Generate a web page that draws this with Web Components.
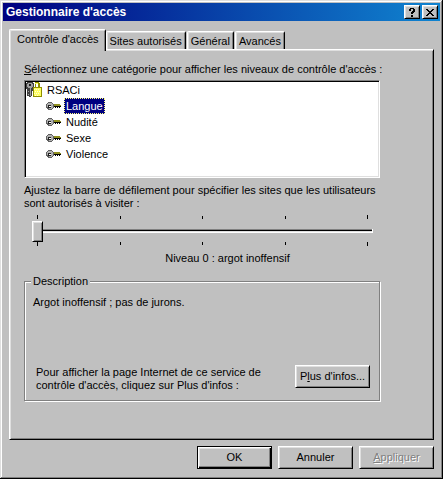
<!DOCTYPE html>
<html lang="fr">
<head>
<meta charset="utf-8">
<title>Gestionnaire d'accès</title>
<style>
  body {
    margin: 0;
    background: #c0c0c0;
    color: #000;
    font: 11px/13px "Liberation Sans", Arial, sans-serif;
  }
</style>
</head>
<body>

<ratings-dialog></ratings-dialog>

<template id="win-button">
  <style>
    :host { display: block; width: 75px; }
    button {
      display: block;
      box-sizing: border-box;
      width: 100%;
      height: 23px;
      padding: 0;
      border: 1px solid;
      border-color: #fff #000 #000 #fff;
      background: #c0c0c0;
      box-shadow: inset 1px 1px #dfdfdf, inset -1px -1px #808080;
      color: #000;
      font: inherit;
      white-space: nowrap;
    }
    :host([default]) button {
      border-color: #000;
      box-shadow: inset 1px 1px #fff, inset -1px -1px #000, inset -2px -2px #808080, inset 2px 2px #dfdfdf;
    }
    button:disabled { color: #808080; text-shadow: 1px 1px #fff; }
  </style>
  <button type="button"><slot></slot></button>
</template>

<template id="title-bar">
  <style>
    :host {
      display: flex;
      align-items: center;
      height: 18px;
      padding: 0 2px 0 3px;
      background: linear-gradient(90deg, #000080, #1084d0);
      color: #fff;
      font-size: 12px;
      font-weight: bold;
    }
    span { flex: 1; }
    button {
      display: grid;
      place-items: center;
      box-sizing: border-box;
      width: 16px;
      height: 14px;
      padding: 0;
      border: 1px solid;
      border-color: #fff #000 #000 #fff;
      background: #c0c0c0;
      box-shadow: inset 1px 1px #dfdfdf, inset -1px -1px #808080;
    }
    button + button { margin-left: 2px; }
    svg { display: block; shape-rendering: crispEdges; }
  </style>
  <span><slot></slot></span>
  <button type="button" aria-label="Aide">
    <svg width="8" height="9" viewBox="0 0 8 9"><path d="M2 0h4v1h1v3h-1v1h-1v1h-2v-2h1v-1h1v-2h-2v2h-2v-2h1zM3 7h2v2h-2z"/></svg>
  </button>
  <button type="button" aria-label="Fermer">
    <svg width="8" height="7" viewBox="0 0 8 7"><path d="M0 0h2v1h1v1h2v-1h1v-1h2v1h-1v1h-1v1h-1v1h1v1h1v1h1v1h-2v-1h-1v-1h-2v1h-1v1h-2v-1h1v-1h1v-1h1v-1h-1v-1h-1v-1h-1z"/></svg>
  </button>
</template>

<template id="tab-bar">
  <style>
    :host { display: flex; align-items: flex-end; padding-left: 1px; }
    button {
      height: 18px;
      padding: 1px 3px 0;
      border: 1px solid;
      border-color: #fff #000 transparent #fff;
      border-bottom: 0;
      border-radius: 2px 2px 0 0;
      background: #c0c0c0;
      box-shadow: inset 1px 1px #dfdfdf, inset -1px 0 #808080;
      color: #000;
      font: inherit;
      white-space: nowrap;
      margin-right: 1px;
    }
    button[aria-selected="true"] {
      position: relative;
      z-index: 1;
      height: 22px;
      margin: 0 0 -2px -1px;
      padding: 0 6px 3px 7px;
    }
  </style>
</template>

<template id="category-tree">
  <style>
    :host {
      display: block;
      height: 94px;
      border: 1px solid;
      border-color: #808080 #fff #fff #808080;
      padding: 1px;
      background: #fff;
      box-shadow: inset 1px 1px #000, inset -1px -1px #dfdfdf;
    }
    ul { margin: 0; padding: 0; list-style: none; }
    ul ul { padding-left: 19px; }
    .row { display: flex; align-items: center; height: 16px; gap: 3px; }
    .row span { padding: 0 2px; line-height: 16px; }
    [aria-selected="true"] span {
      background: #000080;
      color: #fff;
      outline: 1px dotted #ffff7f;
      outline-offset: -1px;
    }
    svg { display: block; shape-rendering: crispEdges; }
  </style>
  <ul role="tree" aria-label="Catégories"></ul>
</template>

<template id="level-slider">
  <style>
    :host { display: block; padding: 0 7px 0 8px; }
    .ticks { display: flex; align-items: flex-end; justify-content: space-between; padding: 0 5px; }
    .ticks i { width: 1px; height: 3px; background: #000; }
    .ticks i:first-child, .ticks i:last-child { height: 4px; }
    .ticks.bottom { align-items: flex-start; margin-top: 1px; }
    input {
      display: block;
      width: 100%;
      height: 21px;
      margin: 1px 0 0;
      appearance: none;
      background: none;
    }
    input::-webkit-slider-runnable-track {
      height: 4px;
      background: linear-gradient(#808080 1px, #000 1px 2px, #dfdfdf 2px 3px, #fff 3px);
      border-right: 1px solid #fff;
      box-sizing: border-box;
    }
    input::-webkit-slider-thumb {
      appearance: none;
      box-sizing: border-box;
      width: 11px;
      height: 21px;
      margin-top: -8px;
      border: 1px solid;
      border-color: #fff #000 #000 #fff;
      background: #c0c0c0;
      box-shadow: inset 1px 1px #dfdfdf, inset -1px -1px #808080;
    }
    output { display: block; margin-top: 6px; padding-left: 50px; text-align: center; }
  </style>
  <div class="ticks"><i></i><i></i><i></i><i></i><i></i></div>
  <input type="range" id="level" min="0" max="4" value="0" aria-label="Niveau">
  <div class="ticks bottom"><i></i><i></i><i></i><i></i><i></i></div>
  <output for="level"><slot></slot></output>
</template>

<template id="group-box">
  <style>
    :host { display: block; }
    fieldset {
      min-width: 0;
      margin: 0;
      padding: 8px 9px 8px 8px;
      border: 1px solid #808080;
      box-shadow: 1px 1px #fff, inset 1px 1px #fff;
    }
    legend { margin-left: -2px; padding: 0 2px; background: #c0c0c0; }
  </style>
  <fieldset>
    <legend><slot name="legend"></slot></legend>
    <slot></slot>
  </fieldset>
</template>

<template id="ratings-dialog">
  <style>
    :host {
      display: flex;
      flex-direction: column;
      box-sizing: border-box;
      min-height: 100vh;
      padding: 3px;
      background: #c0c0c0;
      box-shadow: inset -1px -1px #000, inset 1px 1px #dfdfdf, inset -2px -2px #808080, inset 2px 2px #fff;
    }
    main { flex: 1; display: flex; flex-direction: column; padding: 8px 6px 7px; }
    .panel {
      flex: 1;
      padding: 13px 53px 0 14px;
      border: 1px solid;
      border-color: #fff #000 #000 #fff;
      box-shadow: inset 1px 1px #dfdfdf, inset -1px -1px #808080;
    }
    p { margin: 0; white-space: nowrap; }
    category-tree { margin: 4px 0 6px; }
    level-slider { margin-top: 5px; }
    group-box { margin-top: 10px; }
    .more { display: flex; align-items: flex-start; justify-content: space-between; margin-top: 56px; padding-left: 3px; }
    .more p { padding-top: 1px; }
    footer { display: flex; justify-content: flex-end; gap: 6px; padding-top: 6px; }
  </style>
  <title-bar>Gestionnaire d'accès</title-bar>
  <main>
    <tab-bar tabs="Contrôle d'accès|Sites autorisés|Général|Avancés"></tab-bar>
    <div class="panel" role="tabpanel">
      <p><u>S</u>électionnez une catégorie pour afficher les niveaux de contrôle d'accès :</p>
      <category-tree root="RSACi" items="Langue|Nudité|Sexe|Violence"></category-tree>
      <p>A<u>j</u>ustez la barre de défilement pour spécifier les sites que les utilisateurs<br>sont autorisés à visiter :</p>
      <level-slider>Niveau 0 : argot inoffensif</level-slider>
      <group-box>
        <span slot="legend">Description</span>
        <p>Argot inoffensif ; pas de jurons.</p>
        <div class="more">
          <p>Pour afficher la page Internet de ce service de<br>contrôle d'accès, cliquez sur Plus d'infos :</p>
          <win-button>P<u>l</u>us d'infos...</win-button>
        </div>
      </group-box>
    </div>
    <footer>
      <win-button default>OK</win-button>
      <win-button>Annuler</win-button>
      <win-button disabled><u>A</u>ppliquer</win-button>
    </footer>
  </main>
</template>

<script>
const KEY_ICON = `<svg width="16" height="16" viewBox="0 0 16 16">
  <path fill="#606060" d="M3 4h4v1h1v1h1v4h-1v1h-1v1h-4v-1h-1v-1h-1v-4h1v-1h1z"/>
  <path fill="#b0b0b0" d="M3 5h4v1h1v4h-1v1h-3v-1h-1v-1h-1v-3h1z"/>
  <path fill="#202020" d="M3 7h3v3h-3z"/>
  <path fill="#fff" d="M4 8h2v1h-2z"/>
  <path fill="#909020" d="M9 6h6v1h1v1h-7z"/>
  <path fill="#000" d="M9 8h7v1h-7zM10 9h1v1h-1zM12 9h1v1h-1zM14 9h1v1h-1z"/>
</svg>`;

const LOCK_ICON = `<svg width="16" height="16" viewBox="0 0 16 16">
  <path fill="#404040" d="M1 0h6v1h1v5h-1v3h-1v5h-1v1h-2v-1h-2v-7h-1v-6h1z"/>
  <path fill="#a0a0a0" d="M2 1h4v1h1v3h-1v1h-1v8h-1v-8h-2v-1h-1v-3h1zM2 9h1v1h-1zM2 12h1v1h-1z"/>
  <path fill="#202020" d="M3 2h2v2h-2z"/>
  <path fill="#909000" d="M9 0h4v1h1v4h2v10h-9v-10h2z"/>
  <path fill="#fff" d="M10 2h2v3h-2z"/>
  <path fill="#ffff60" d="M9 1h3v1h-3zM8 6h7v8h-7z"/>
  <path fill="#ffffd0" d="M8 7h1v1h-1zM10 7h1v1h-1zM12 7h1v1h-1zM9 9h1v1h-1zM11 9h1v1h-1zM13 9h1v1h-1zM8 11h1v1h-1zM10 11h1v1h-1zM12 11h1v1h-1zM9 13h1v1h-1zM11 13h1v1h-1z"/>
</svg>`;

// Base class: clones the template named after the element
class TemplateElement extends HTMLElement {
  constructor() {
    super();
    const tmpl = document.getElementById(this.localName);
    this.attachShadow({ mode: 'open' }).appendChild(tmpl.content.cloneNode(true));
  }
}

class WinButton extends TemplateElement {
  connectedCallback() {
    this.shadowRoot.querySelector('button').disabled = this.hasAttribute('disabled');
  }
}

class TabBar extends TemplateElement {
  connectedCallback() {
    this.setAttribute('role', 'tablist');
    this.getAttribute('tabs').split('|').forEach((name, i) => {
      const tab = document.createElement('button');
      tab.type = 'button';
      tab.setAttribute('role', 'tab');
      tab.setAttribute('aria-selected', i === 0);
      tab.textContent = name;
      this.shadowRoot.appendChild(tab);
    });
  }
}

class CategoryTree extends TemplateElement {
  connectedCallback() {
    const items = this.getAttribute('items').split('|');
    this.shadowRoot.querySelector('ul').innerHTML = `
      <li role="treeitem" aria-expanded="true">
        <div class="row">${LOCK_ICON}<span>${this.getAttribute('root')}</span></div>
        <ul role="group">${items.map((name, i) => `
          <li class="row" role="treeitem" aria-selected="${i === 0}">${KEY_ICON}<span>${name}</span></li>`).join('')}
        </ul>
      </li>`;
  }
}

customElements.define('win-button', WinButton);
customElements.define('title-bar', class extends TemplateElement {});
customElements.define('tab-bar', TabBar);
customElements.define('category-tree', CategoryTree);
customElements.define('level-slider', class extends TemplateElement {});
customElements.define('group-box', class extends TemplateElement {});
customElements.define('ratings-dialog', class extends TemplateElement {});
</script>
</body>
</html>
